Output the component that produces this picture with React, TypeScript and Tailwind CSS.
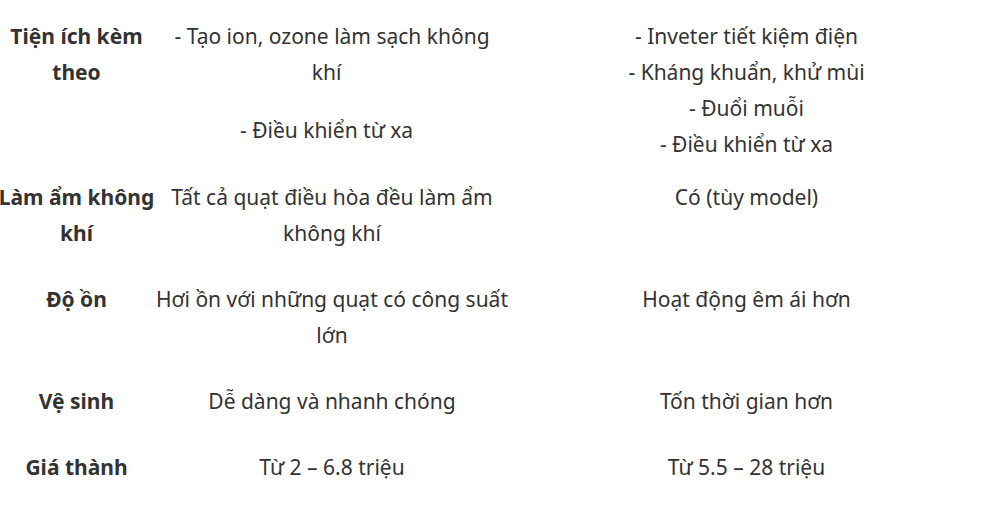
import React from 'react';

type Row = {
  label: string;
  a: string[];
  b: string[];
  gap?: string;
};

const ROWS: Row[] = [
  {
    label: 'Tiện ích kèm theo',
    a: ['- Tạo ion, ozone làm sạch không khí\u00a0\u00a0', '- Điều khiển từ xa\u00a0\u00a0'],
    b: ['- Inveter tiết kiệm điện', '- Kháng khuẩn, khử mùi', '- Đuổi muỗi', '- Điều khiển từ xa'],
    gap: 'pb-[17px]',
  },
  {
    label: 'Làm ẩm không khí',
    a: ['Tất cả quạt điều hòa đều làm ẩm không khí'],
    b: ['Có (tùy model)'],
  },
  {
    label: 'Độ ồn',
    a: ['Hơi ồn với những quạt có công suất lớn'],
    b: ['Hoạt động êm ái hơn'],
  },
  {
    label: 'Vệ sinh',
    a: ['Dễ dàng và nhanh chóng'],
    b: ['Tốn thời gian hơn'],
  },
  {
    label: 'Giá thành',
    a: ['Từ 2 – 6.8 triệu'],
    b: ['Từ 5.5 – 28 triệu'],
  },
];

export default function App() {
  return (
    <div
      className="w-[984px] h-[513px] overflow-hidden bg-white pt-[18px] text-[21px] leading-[36px] text-[#333333] text-center"
      style={{ fontFamily: '"Noto Sans", "Open Sans", sans-serif' }}
    >
      {ROWS.map((row) => (
        <div key={row.label} className={`flex items-start ${row.gap ?? 'pb-[30px]'}`}>
          <div className="w-[157px] ml-[-2px] shrink-0 font-bold">{row.label}</div>
          <div className="w-[354px] shrink-0 flex flex-col gap-[22px]">
            {row.a.map((t) => (
              <p key={t}>{t}</p>
            ))}
          </div>
          <div className="flex-1">
            {row.b.map((t) => (
              <p key={t}>{t}</p>
            ))}
          </div>
        </div>
      ))}
    </div>
  );
}
